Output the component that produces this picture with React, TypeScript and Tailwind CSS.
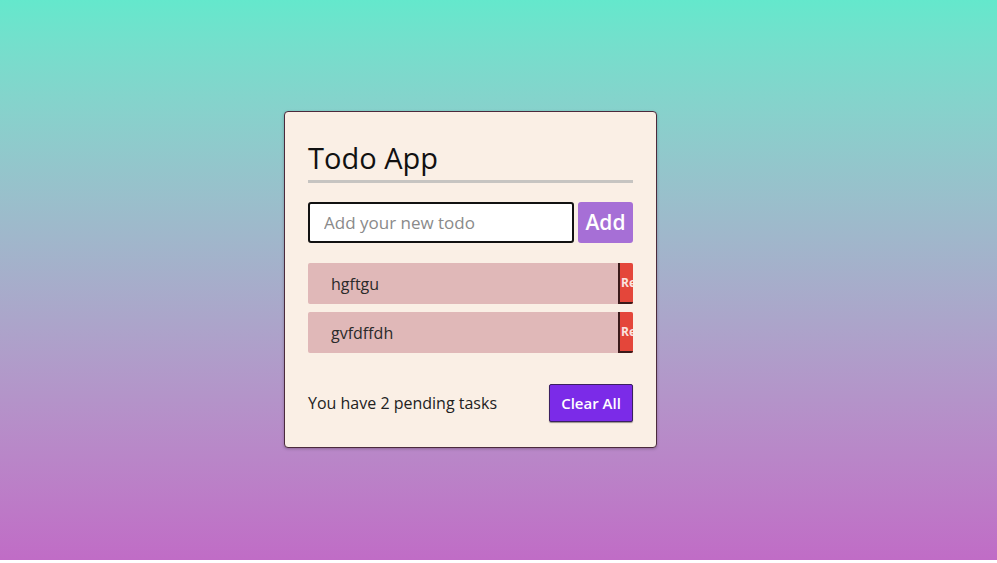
export default function App() {
  const todos = ["hgftgu", "gvfdffdh"];

  return (
    <div className="bg-white h-[563px]">
      <div
        className="h-[560px] bg-gradient-to-b from-[#64e8cc] to-[#c06cc6] flex pl-[284px] pt-[111px]"
        style={{ fontFamily: '"Open Sans", "Liberation Sans", sans-serif' }}
      >
        <div className="w-[373px] h-[337px] bg-[#faefe5] border border-[#4b2a3c] rounded-[4px] shadow-[0_1px_3px_rgba(0,0,0,0.25)] px-[23px] pt-[26px]">
          {/* Title */}
          <h1 className="text-[29px] leading-[40px] text-[#111] border-b-[3px] border-[#c6c4c1] pb-[2px]">
            Todo App
          </h1>

          {/* Input row */}
          <div className="flex gap-[4px] mt-[19px]">
            <input
              className="w-[266px] h-[41px] border-2 border-[#111] rounded-[3px] bg-white px-[14px] text-[17px] outline-none placeholder:text-[#8a8a8a]"
              placeholder="Add your new todo"
            />
            <button className="flex-1 h-[41px] bg-[#a66fd6] rounded-[3px] text-white text-[21px] font-semibold">
              Add
            </button>
          </div>

          {/* List */}
          <ul className="mt-[20px] flex flex-col gap-[8px]">
            {todos.map((t) => (
              <li key={t} className="h-[41px] bg-[#e0b8b8] flex items-center rounded-[2px] overflow-hidden">
                <span className="flex-1 pl-[23px] text-[16px] text-[#2a2a2a]">{t}</span>
                <button className="w-[15px] h-full bg-[#e4463a] border-l-2 border-b-2 border-[#3a1a1a] overflow-hidden text-[#fbe3e0] text-[12px] font-bold whitespace-nowrap text-left pl-px">
                  Remove
                </button>
              </li>
            ))}
          </ul>

          {/* Footer */}
          <div className="flex items-center justify-between mt-[31px]">
            <span className="text-[16px] text-[#222]">You have {todos.length} pending tasks</span>
            <button className="w-[84px] h-[38px] bg-[#7b2be8] border border-[#3a2060] rounded-[2px] text-white text-[15px] font-semibold shadow-[0_1px_1px_rgba(0,0,0,0.4)]">
              Clear All
            </button>
          </div>
        </div>
      </div>
    </div>
  );
}
